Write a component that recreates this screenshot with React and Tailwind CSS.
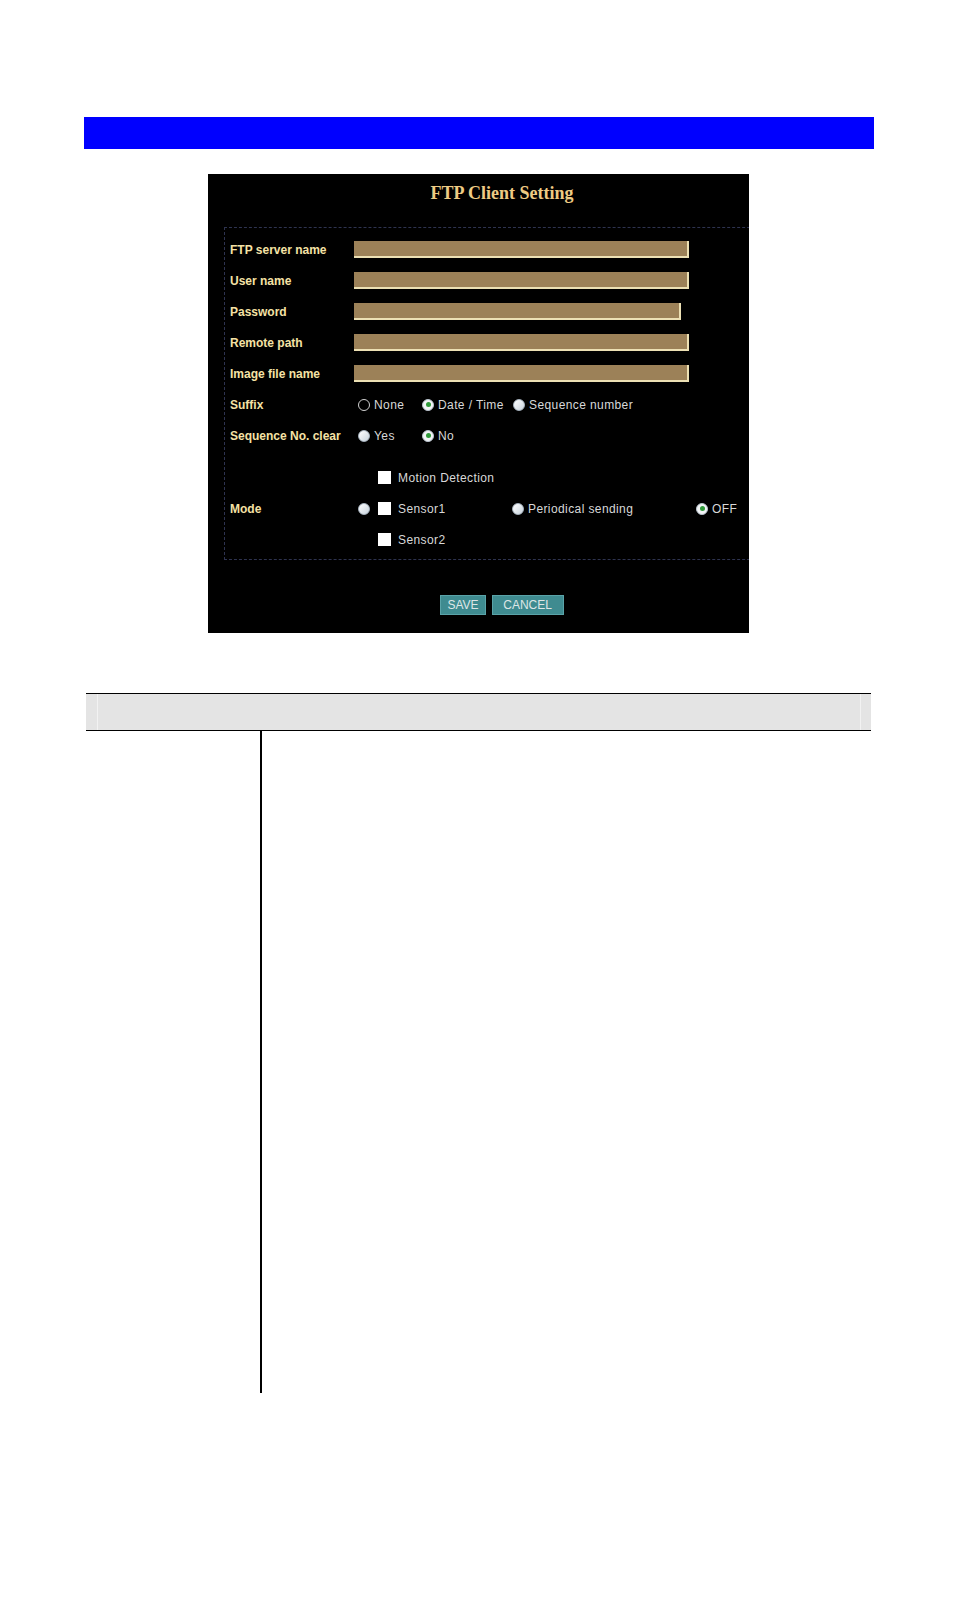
const LABEL = "text-[12px] font-bold text-[#f5e2a5]";
const OPT = "text-[12px] tracking-[0.4px] text-[#d8d8d8]";

function Radio({ kind }) {
  if (kind === "empty") {
    return <span className="inline-block w-[12px] h-[12px] rounded-full border border-[#d0d0d0] bg-black" />;
  }
  if (kind === "on") {
    return (
      <span className="inline-flex items-center justify-center w-[12px] h-[12px] rounded-full bg-[#f2f4f6] border border-[#b8c2cc]">
        <span className="w-[5px] h-[5px] rounded-full bg-[#2f9a3a]" />
      </span>
    );
  }
  return <span className="inline-block w-[12px] h-[12px] rounded-full bg-gradient-to-br from-white to-[#c9d4de] border border-[#aab6c2]" />;
}

function Box() {
  return <span className="inline-block w-[13px] h-[13px] bg-white" />;
}

function Field({ label, short }) {
  return (
    <div className="flex items-center h-[31px]">
      <div className={`w-[124px] ${LABEL}`}>{label}</div>
      <div
        className={`h-[17px] bg-[#9c8158] border-b-2 border-r-2 border-[#ece0b4] ${short ? "w-[327px]" : "w-[335px]"}`}
      />
    </div>
  );
}

function Opt({ kind, text, className = "" }) {
  return (
    <span className={`flex items-center gap-[4px] ${className}`}>
      <Radio kind={kind} />
      <span className={OPT}>{text}</span>
    </span>
  );
}

export default function App() {
  return (
    <div className="w-[954px] h-[1608px] bg-white overflow-hidden" style={{ fontFamily: '"Liberation Sans", Arial, sans-serif' }}>
      <div className="ml-[84px] mt-[117px] w-[790px] h-[32px] bg-[#0000ff]" />

      <div className="ml-[208px] mt-[25px] w-[541px] h-[459px] bg-black overflow-hidden">
        <div className="w-[588px]">
          <h1
            className="pt-[8px] text-center text-[18px] font-bold text-[#eecb84] leading-[22px]"
            style={{ fontFamily: '"Liberation Serif", "Times New Roman", serif' }}
          >
            FTP Client Setting
          </h1>

          <div className="mx-[16px] mt-[23px] border border-dashed border-[#2e3350] pt-[6px] pb-[4px] pl-[5px]">
            <Field label="FTP server name" />
            <Field label="User name" />
            <Field label="Password" short />
            <Field label="Remote path" />
            <Field label="Image file name" />

            <div className="flex items-center h-[31px]">
              <div className={`w-[128px] ${LABEL}`}>Suffix</div>
              <Opt kind="empty" text="None" className="w-[64px]" />
              <Opt kind="on" text="Date / Time" className="w-[91px]" />
              <Opt kind="off" text="Sequence number" />
            </div>

            <div className="flex items-center h-[31px]">
              <div className={`w-[128px] ${LABEL}`}>Sequence No. clear</div>
              <Opt kind="off" text="Yes" className="w-[64px]" />
              <Opt kind="on" text="No" />
            </div>

            <div className="mt-[11px] flex items-center">
              <div className={`w-[128px] ${LABEL}`}>Mode</div>
              <div className="flex flex-col">
                <div className="flex items-center h-[31px] pl-[20px] gap-[7px]">
                  <Box />
                  <span className={OPT}>Motion Detection</span>
                </div>
                <div className="flex items-center h-[31px]">
                  <span className="w-[20px] flex"><Radio kind="off" /></span>
                  <span className="flex items-center gap-[7px] w-[134px]">
                    <Box />
                    <span className={OPT}>Sensor1</span>
                  </span>
                  <Opt kind="off" text="Periodical sending" className="w-[184px]" />
                  <Opt kind="on" text="OFF" />
                </div>
                <div className="flex items-center h-[31px] pl-[20px] gap-[7px]">
                  <Box />
                  <span className={OPT}>Sensor2</span>
                </div>
              </div>
            </div>
          </div>

          <div className="mt-[35px] flex justify-center gap-[6px]">
            <button className="h-[20px] px-[6px] bg-[#3f8b90] border border-[#5aa3a8] text-[12px] text-[#dde6e6] leading-none">
              SAVE
            </button>
            <button className="h-[20px] w-[72px] bg-[#3f8b90] border border-[#5aa3a8] text-[12px] text-[#dde6e6] leading-none">
              CANCEL
            </button>
          </div>
        </div>
      </div>

      <div className="ml-[86px] mt-[60px] w-[785px]">
        <div className="flex h-[38px] bg-[#e4e4e4] border-t border-b border-black">
          <div className="w-[12px] border-r border-[#f2f2f2]" />
          <div className="flex-1" />
          <div className="w-[11px] border-l border-[#f2f2f2]" />
        </div>
        <div className="flex h-[662px]">
          <div className="w-[174px]" />
          <div className="w-[2px] bg-black" />
          <div className="flex-1" />
        </div>
      </div>
    </div>
  );
}
